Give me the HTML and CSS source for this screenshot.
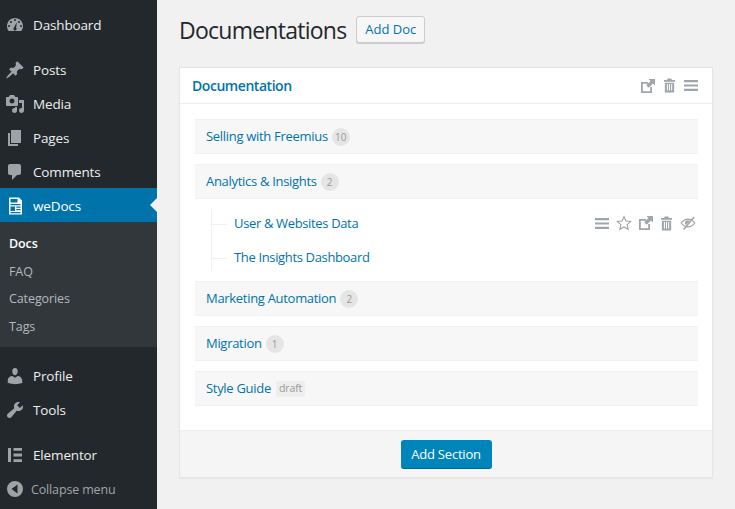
FILE: index.html
```html
<!DOCTYPE html>
<html lang="en">
<head>
    <meta charset="UTF-8">
    <title>Documentations</title>
    <link rel="stylesheet" href="styles.css">
</head>
<body>
    <svg class="icon-defs" width="0" height="0">
        <symbol id="i-open" viewBox="0 0 14 14"><path d="M0 3h7v1.800H1.800v7.400h7.400V8H11v6H0z"/><path d="M7.500 0H14v6.500l-2-2-4.300 4.300-2.500-2.500L9.500 2z"/></symbol>
        <symbol id="i-trash" viewBox="0 0 14 15"><path d="M5 0h4l.6 1.500H13V3.500H1V1.500h3.400z"/><path d="M2 4.500h10V15H2zM4.200 6v7h1.100V6zm2.300 0v7h1.100V6zm2.300 0v7h1.100V6z" fill-rule="evenodd"/></symbol>
        <symbol id="i-menu" viewBox="0 0 14 11"><path d="M0 0h14v2.200H0zM0 4.400h14v2.200H0zM0 8.800h14V11H0z"/></symbol>
    </svg>

    <div class="sidebar">
        <ul class="menu">
            <li class="menu-item">
                <svg class="menu-icon" viewBox="0 0 20 20"><path fill-rule="evenodd" d="M3.760 16h12.480c1.100-1.370 1.760-3.110 1.760-5 0-4.420-3.580-8-8-8s-8 3.580-8 8c0 1.890.66 3.630 1.760 5zM10 4a1 1 0 110 2 1 1 0 010-2zM6 6a1 1 0 110 2 1 1 0 010-2zm8 0a1 1 0 110 2 1 1 0 010-2zM4 10a1 1 0 110 2 1 1 0 010-2zm12 0a1 1 0 110 2 1 1 0 010-2zM11.800 7.200l-.7 5.500a1.600 1.600 0 11-2.200 0z"/></svg>
                <span>Dashboard</span>
            </li>
            <li class="menu-item first-group">
                <svg class="menu-icon" viewBox="0 0 20 20"><path d="M10.440 3.020l1.820-1.820 6.360 6.350-1.830 1.820c-1.050-.68-2.480-.57-3.410.36l-.75.75c-.92.93-1.040 2.350-.35 3.410l-1.830 1.820-2.410-2.410-2.800 2.790c-.42.42-3.380 2.710-3.800 2.290s1.860-3.390 2.280-3.810l2.790-2.790L4.100 9.360l1.830-1.820c1.050.69 2.480.57 3.400-.36l.75-.75c.93-.92 1.050-2.350.36-3.410z"/></svg>
                <span>Posts</span>
            </li>
            <li class="menu-item">
                <svg class="menu-icon" viewBox="0 0 20 20"><path d="M13 11V4c0-.55-.45-1-1-1h-1.670L9 1H5L3.670 3H2c-.55 0-1 .45-1 1v7c0 .55.45 1 1 1h10c.55 0 1-.45 1-1zM7 4.500c1.380 0 2.500 1.120 2.500 2.500S8.380 9.500 7 9.500 4.500 8.380 4.500 7 5.620 4.500 7 4.500zM14 6h5v10.500c0 1.380-1.120 2.500-2.500 2.500S14 17.880 14 16.500s1.120-2.500 2.500-2.500c.17 0 .34.020.5.050V9h-3V6zm-4 8.050V13h2v3.500c0 1.380-1.120 2.500-2.500 2.500S7 17.880 7 16.500 8.120 14 9.500 14c.17 0 .34.020.5.050z"/></svg>
                <span>Media</span>
            </li>
            <li class="menu-item">
                <svg class="menu-icon" viewBox="0 0 20 20"><path d="M6 15V2h10v13H6zm-1 1h8v2H3V5h2v11z"/></svg>
                <span>Pages</span>
            </li>
            <li class="menu-item">
                <svg class="menu-icon" viewBox="0 0 20 20"><path d="M5 2h9c1.100 0 2 .9 2 2v7c0 1.100-.9 2-2 2h-2l-5 5v-5H5c-1.100 0-2-.9-2-2V4c0-1.100.9-2 2-2z"/></svg>
                <span>Comments</span>
            </li>
            <li class="menu-item current">
                <svg class="menu-icon" viewBox="0 0 20 20"><path fill-rule="evenodd" d="M4 1.500h10l3 3V18.500H4zM5.500 3v3.500h7V3zM5.500 8v1.200h10V8zM5.500 10.500V15h4.500v-4.500zM11.300 10.500v1.200h4.200v-1.200zM11.300 13v1.200h4.200V13zM5.500 16v1.200h10V16z"/></svg>
                <span>weDocs</span>
            </li>
            <li class="submenu">
                <a class="sub-item active">Docs</a>
                <a class="sub-item">FAQ</a>
                <a class="sub-item">Categories</a>
                <a class="sub-item">Tags</a>
            </li>
            <li class="menu-item after-sub">
                <svg class="menu-icon" viewBox="0 0 20 20"><path d="M10 9.250c-2.270 0-2.730-3.440-2.730-3.440C7 4.020 7.820 2 9.970 2c2.160 0 2.980 2.020 2.710 3.810 0 0-.41 3.440-2.680 3.440zm0 2.570L12.720 10c2.390 0 4.520 2.330 4.520 4.530v2.490s-3.650 1.130-7.240 1.130c-3.650 0-7.240-1.130-7.240-1.130v-2.490c0-2.250 1.940-4.480 4.470-4.480z"/></svg>
                <span>Profile</span>
            </li>
            <li class="menu-item">
                <svg class="menu-icon" viewBox="0 0 20 20"><path d="M16.680 9.770c-1.340 1.340-3.300 1.670-4.950.99l-5.410 6.520c-.99.99-2.590.99-3.580 0s-.99-2.590 0-3.570l6.520-5.420c-.68-1.650-.35-3.610.99-4.950 1.280-1.280 3.120-1.620 4.720-1.060l-2.890 2.890 2.820 2.820 2.860-2.860c.56 1.600.22 3.460-1.080 4.640z"/></svg>
                <span>Tools</span>
            </li>
            <li class="menu-item first-group">
                <svg class="menu-icon" viewBox="0 0 20 20"><path d="M3 3h3v14H3zM8.500 3H17v2.800H8.500zM8.500 8.600H17v2.800H8.500zM8.500 14.200H17V17H8.500z"/></svg>
                <span>Elementor</span>
            </li>
            <li class="menu-item collapse">
                <svg class="menu-icon" viewBox="0 0 20 20"><path fill-rule="evenodd" d="M10 2a8 8 0 110 16 8 8 0 010-16zM12.500 5.500L6.500 10l6 4.500z"/></svg>
                <span>Collapse menu</span>
            </li>
        </ul>
    </div>

    <div class="content">
        <div class="page-head">
            <h1>Documentations</h1>
            <a class="btn">Add Doc</a>
        </div>

        <div class="panel">
            <div class="panel-head">
                <a class="panel-title">Documentation</a>
                <div class="actions">
                    <svg class="act act-open"><use href="#i-open"/></svg>
                    <svg class="act act-trash"><use href="#i-trash"/></svg>
                    <svg class="act act-menu"><use href="#i-menu"/></svg>
                </div>
            </div>

            <div class="panel-body">
                <div class="section">
                    <a>Selling with Freemius</a><span class="count">10</span>
                </div>
                <div class="section">
                    <a>Analytics &amp; Insights</a><span class="count">2</span>
                </div>
                <ul class="children">
                    <li class="child">
                        <a>User &amp; Websites Data</a>
                        <div class="actions row-actions">
                            <svg class="act act-menu"><use href="#i-menu"/></svg>
                            <svg class="act act-star" viewBox="0 0 18 18"><path d="M9 1.800l2.200 4.900 5.300.6-4 3.600 1.100 5.300L9 13.500l-4.600 2.700 1.100-5.300-4-3.600 5.300-.6z" fill="none" stroke="currentColor" stroke-width="1.300"/></svg>
                            <svg class="act act-open"><use href="#i-open"/></svg>
                            <svg class="act act-trash"><use href="#i-trash"/></svg>
                            <svg class="act act-eye" viewBox="0 0 16 14"><path fill-rule="evenodd" d="M8 2.500c3 0 5.700 1.800 7.500 4.500-1.800 2.700-4.500 4.500-7.500 4.500S2.300 9.700.5 7C2.300 4.300 5 2.500 8 2.500zM8 3.700C5.600 3.700 3.400 5 1.900 7c1.500 2 3.700 3.300 6.100 3.300s4.600-1.300 6.100-3.300C12.600 5 10.400 3.700 8 3.700z"/><path d="M8 4.200a2.800 2.800 0 011.900.7l-4 4.200A2.800 2.800 0 018 4.200z"/><path d="M3 13L13.500.5l1.200 1L4.200 14z"/></svg>
                        </div>
                    </li>
                    <li class="child"><a>The Insights Dashboard</a></li>
                </ul>
                <div class="section">
                    <a>Marketing Automation</a><span class="count">2</span>
                </div>
                <div class="section">
                    <a>Migration</a><span class="count">1</span>
                </div>
                <div class="section">
                    <a>Style Guide</a><span class="draft">draft</span>
                </div>
            </div>

            <div class="panel-foot">
                <a class="btn-primary">Add Section</a>
            </div>
        </div>
    </div>
</body>
</html>
```

FILE: styles.css
```css
html, body {
    height: 100%;
}
body {
    margin: 0;
    display: flex;
    overflow: hidden;
    background-color: #f1f1f1;
    font-family: "Open Sans", "Noto Sans", sans-serif;
    font-size: 13px;
    color: #444;
}
.icon-defs {
    position: absolute;
}
a {
    color: #0073aa;
}
ul {
    list-style: none;
    margin: 0;
    padding: 0;
}

/* sidebar */
.sidebar {
    width: 157px;
    flex-shrink: 0;
    background-color: #23282d;
}
.menu {
    padding-top: 8px;
}
.menu-item {
    height: 34px;
    box-sizing: border-box;
    display: flex;
    align-items: center;
    color: #eee;
    font-size: 13.5px;
    letter-spacing: -0.15px;
    position: relative;
}
.menu-icon {
    width: 20px;
    height: 20px;
    margin-left: 5px;
    margin-right: 8px;
    fill: #9ea3a8;
    flex-shrink: 0;
}
.first-group {
    margin-top: 11px;
}
.after-sub {
    margin-top: 12px;
}
.current {
    margin-top: -1px;
    padding-top: 1px;
    background-color: #0073aa;
    color: #fff;
}
.current .menu-icon {
    fill: #fff;
}
.current::after {
    content: "";
    position: absolute;
    right: 0;
    top: 10px;
    border: 7px solid transparent;
    border-left-width: 0;
    border-right-color: #f1f1f1;
}
.submenu {
    box-sizing: border-box;
    height: 125px;
    padding-top: 8px;
    background-color: #32373c;
}
.sub-item {
    display: block;
    padding-left: 9px;
    height: 27.7px;
    line-height: 27.7px;
    color: #b4b9be;
    font-size: 12.5px;
    letter-spacing: -0.1px;
}
.sub-item.active {
    color: #fff;
    font-weight: 600;
}
.collapse {
    color: #a0a5aa;
    font-size: 12.5px;
}
.collapse .menu-icon {
    margin-right: 6px;
}

/* content */
.content {
    flex: 1;
    padding: 16px 22px 0;
}
.page-head {
    display: flex;
    align-items: center;
    gap: 10px;
    height: 27px;
    margin-bottom: 24px;
}
h1 {
    margin: 0;
    font-size: 23px;
    font-weight: 400;
    letter-spacing: -0.75px;
    color: #23282d;
}
.btn {
    height: 25px;
    line-height: 25px;
    padding: 0 8px;
    border: 1px solid #ccc;
    border-radius: 3px;
    background-color: #f7f7f7;
    box-shadow: 0 1px 0 #ccc;
    font-size: 13px;
    font-weight: 500;
    color: #0073aa;
}

.panel {
    width: 532px;
    background-color: #fff;
    border: 1px solid #e5e5e5;
    box-shadow: 0 1px 1px rgba(0, 0, 0, 0.04);
}
.panel-head {
    height: 35px;
    display: flex;
    align-items: center;
    justify-content: space-between;
    padding: 0 14px 0 12px;
    border-bottom: 1px solid #eee;
}
.panel-title {
    font-size: 14px;
    font-weight: 600;
    letter-spacing: -0.45px;
}
.actions {
    display: flex;
    align-items: center;
    color: #a0a5aa;
}
.act {
    fill: currentColor;
    flex-shrink: 0;
}
.act-open {
    width: 14px;
    height: 14px;
}
.act-trash {
    width: 13px;
    height: 15px;
}
.act-menu {
    width: 14px;
    height: 11px;
}
.panel-head .act-trash {
    margin: 0 8px;
}
.panel-body {
    padding: 15px 14px 14px 15px;
}
.section {
    height: 32px;
    padding: 0 0 1px 11px;
    display: flex;
    align-items: center;
    margin-bottom: 10px;
    background-color: #f7f7f7;
    border: 1px solid #f1f1f1;
    border-width: 1px 0;
    font-size: 13px;
    letter-spacing: -0.3px;
}
.count {
    margin: 1px 0 0 4px;
    min-width: 18px;
    height: 18px;
    line-height: 18px;
    border-radius: 50%;
    background-color: #e5e5e5;
    color: #999;
    font-size: 10px;
    letter-spacing: 0;
    text-align: center;
}
.draft {
    margin: 1px 0 0 5px;
    padding: 0 3px;
    height: 16px;
    line-height: 15px;
    background-color: #eee;
    border-radius: 2px;
    color: #999;
    font-size: 10.5px;
    letter-spacing: -0.1px;
}
.children {
    height: 62px;
    margin: 0 0 10px 16px;
    display: flex;
    flex-direction: column;
    border-left: 1px solid #f1f1f1;
}
.child {
    height: 34px;
    flex-shrink: 0;
    display: flex;
    align-items: center;
    justify-content: space-between;
    padding-left: 22px;
    position: relative;
    font-size: 13px;
    letter-spacing: -0.35px;
}
.child:first-child {
    margin-top: -3px;
}
.child::before {
    content: "";
    position: absolute;
    left: 0;
    top: 18px;
    width: 15px;
    border-top: 1px solid #f1f1f1;
}
.row-actions {
    gap: 7px;
    padding-right: 2px;
}
.act-star {
    width: 16px;
    height: 16px;
}
.act-eye {
    width: 16px;
    height: 14px;
}
.panel-foot {
    height: 46px;
    display: flex;
    align-items: center;
    justify-content: center;
    background-color: #f5f5f5;
    border-top: 1px solid #eee;
}
.btn-primary {
    width: 91px;
    height: 28px;
    line-height: 28px;
    border-radius: 3px;
    background-color: #0085ba;
    border-bottom: 1px solid #006799;
    color: #fff;
    font-size: 13px;
    letter-spacing: -0.2px;
    text-align: center;
}
```
